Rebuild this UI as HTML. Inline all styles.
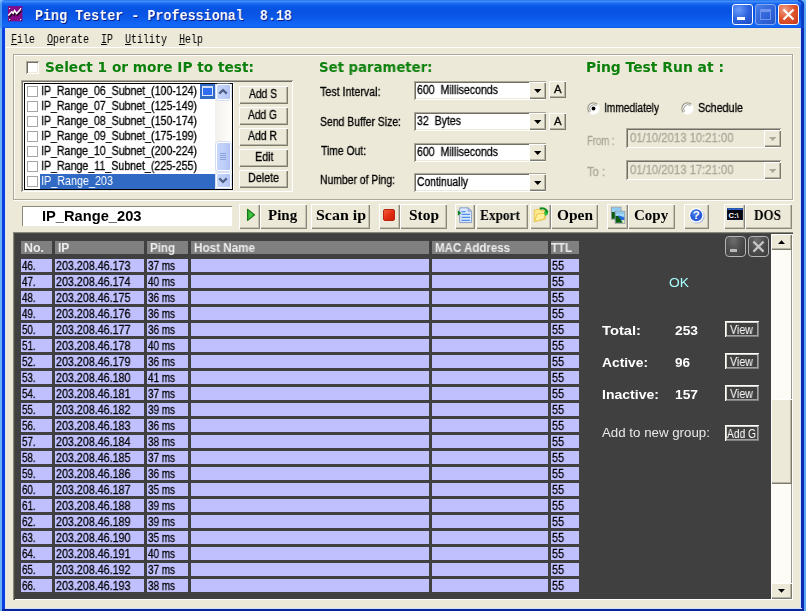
<!DOCTYPE html>
<html><head><meta charset="utf-8"><title>Ping Tester - Professional 8.18</title>
<style>
html,body{margin:0;padding:0;background:#ece9d8;}
body{width:806px;height:611px;overflow:hidden;}
#win{position:relative;width:806px;height:611px;overflow:hidden;background:#ece9d8;}
#win div,#win span.t,#win svg{position:absolute;box-sizing:border-box;}
.t{white-space:nowrap;line-height:1;transform-origin:0 0;will-change:transform;}
.t u{text-decoration:underline;text-underline-offset:1px;text-decoration-thickness:1px;}
/* classic 3d */
.r{background:#ece9d8;box-shadow:inset 1px 1px 0 #fff,inset -1px -1px 0 #7d7b6e,inset -2px -2px 0 #b8b5a4;}
.s{background:#fff;box-shadow:inset 1px 1px 0 #aca899,inset -1px -1px 0 #fff,inset 2px 2px 0 #716f64,inset -2px -2px 0 #ece9d8;}
.tb{background:#ece9d8;box-shadow:inset 1px 1px 0 #fff,inset -1px -1px 0 #8a887a,inset -2px -2px 0 #c5c2b2;}
.cell{background:#c0c0ff;}
.hd{background:#808080;}
.cb{background:#fff;border:1px solid #a5a5a5;}
.vb{background:#404040;box-shadow:inset 1px 1px 0 #fff,inset -1px -1px 0 #808080,inset 2px 2px 0 #d4d0c8,inset -2px -2px 0 #a0a0a0;}

</style></head>
<body>
<div id="win">
<div style="left:0px;top:0px;width:806px;height:28px;background:linear-gradient(to bottom,#2a72ee 0,#3c8cfa 1.5px,#1c6af2 3.5px,#0a58e6 6px,#0852e2 10px,#0a56e6 16px,#0e60f0 21px,#1468f6 25px,#1264f0 27px,#0c56de 28px);"></div>
<div style="left:0px;top:28px;width:2px;height:583px;background:#6cb0f8;"></div>
<div style="left:2px;top:28px;width:3px;height:583px;background:#0c3fe0;"></div>
<div style="left:5px;top:28px;width:1px;height:580px;background:#dfe6f3;"></div>
<div style="left:800px;top:28px;width:1.2px;height:581px;background:#d8e4f4;"></div>
<div style="left:801.2px;top:28px;width:2.8px;height:583px;background:#0a2cb4;"></div>
<div style="left:804px;top:5px;width:2px;height:606px;background:#5aa6f6;"></div>
<div style="left:801px;top:5px;width:3px;height:23px;background:#0a3cc4;"></div>
<div style="left:5px;top:608px;width:797px;height:1px;background:#cfe0f8;"></div>
<div style="left:2px;top:609px;width:802px;height:2px;background:#0a249c;"></div>
<div style="left:0px;top:0px;width:2px;height:28px;background:#4a94f4;"></div>
<svg style="left:796px;top:0" width="10" height="8" viewBox="0 0 10 8"><path d="M3.5 0 A5 5 0 0 1 8.2 5 L8.2 8 L10 8 L10 0 Z" fill="#6ab2fa"/><path d="M2 0 H3.5 A5 5 0 0 1 8.2 5 V8 H5.5 V5 A3 3 0 0 0 2 1.5 Z" fill="#0a3cc4"/></svg>
<svg style="left:0;top:0" width="8" height="8" viewBox="0 0 8 8"><path d="M0 0 H5 A5 5 0 0 0 0 5 Z" fill="#7ab8fa"/></svg>
<svg style="left:8px;top:6px" width="15" height="16" viewBox="0 0 15 16"><rect x="0" y="0.2" width="14.4" height="15.1" fill="#860a86"/><path d="M1.1 11.2 L4.7 7.4 L6 9 L7.4 6.1 L9.4 9.2 L13.3 4.9" stroke="#1a001a" stroke-width="1.5" fill="none"/><path d="M0.3 9.6 L3.9 5.8 L5.2 7.4 L6.6 4.5 L8.6 7.6 L12.5 3.3" stroke="#fff" stroke-width="1.5" fill="none"/><g fill="#2a002a"><rect x="2" y="3" width="1" height="1"/><rect x="13" y="3" width="1" height="1"/><rect x="2" y="14" width="1" height="1"/><rect x="13" y="14" width="1" height="1"/></g><g fill="#fff"><rect x="1" y="2" width="1.2" height="1.2"/><rect x="12" y="2" width="1.2" height="1.2"/><rect x="1" y="13" width="1.2" height="1.2"/><rect x="12" y="13" width="1.2" height="1.2"/></g></svg>
<div style="left:732px;top:4px;width:21px;height:21px;background:radial-gradient(circle at 30% 25%,#6a9cf8 0%,#2e64e0 50%,#1c48c0 100%);border:1px solid #fff;border-radius:3px;"><div style="left:4px;top:12px;width:8px;height:3px;background:#fff;"></div></div>
<div style="left:755px;top:4px;width:21px;height:21px;background:linear-gradient(135deg,#4a7ee8 0%,#2e62d8 60%,#2a58c8 100%);border:1px solid #86a8f0;border-radius:3px;"><div style="left:4px;top:4px;width:11px;height:11px;border:1px solid #6f95ee;border-top-width:3px;"></div></div>
<div style="left:778px;top:4px;width:21px;height:21px;background:radial-gradient(circle at 30% 25%,#f0a088 0%,#e0572f 45%,#c4361a 100%);border:1px solid #fff;border-radius:3px;"><svg style="left:0;top:0" width="19" height="19" viewBox="0 0 19 19"><path d="M4.5 4.5 L14.5 14.5 M14.5 4.5 L4.5 14.5" stroke="#fff" stroke-width="2.2" stroke-linecap="butt"/></svg></div>
<div style="left:6px;top:47px;width:794px;height:1px;background:#fff;"></div>
<div style="left:13px;top:54px;width:780px;height:146px;border:1px solid #aca899;box-shadow:inset 1px 1px 0 #fff,1px 1px 0 #fff;"></div>
<div class="s" style="left:26px;top:61px;width:13px;height:13px;"></div>
<div class="s" style="left:21px;top:80px;width:272px;height:112px;background:#ece9d8;"></div>
<div style="left:23px;top:82px;width:211px;height:108px;background:#fff;"></div>
<div style="left:24px;top:83px;width:209px;height:107px;background:#fff;border:1px solid #000;"></div>
<div style="left:40px;top:174px;width:175px;height:15px;background:#316ac5;"></div>
<div class="cb" style="left:27px;top:86px;width:11px;height:11px;"></div>
<div class="cb" style="left:27px;top:101px;width:11px;height:11px;"></div>
<div class="cb" style="left:27px;top:116px;width:11px;height:11px;"></div>
<div class="cb" style="left:27px;top:131px;width:11px;height:11px;"></div>
<div class="cb" style="left:27px;top:146px;width:11px;height:11px;"></div>
<div class="cb" style="left:27px;top:161px;width:11px;height:11px;"></div>
<div class="cb" style="left:27px;top:176px;width:11px;height:11px;"></div>
<div style="left:200px;top:84px;width:15px;height:15px;background:#316ac5;"></div>
<div style="left:202px;top:86px;width:11px;height:10px;background:#2f6ef0;border:1px solid #dfe8fa;border-top:2px solid #cfdcf8;"></div>
<div style="left:215px;top:84px;width:17px;height:105px;background:linear-gradient(to right,#f3f1ec,#fefefb);"></div>
<div style="left:216.2px;top:84.3px;width:14.4px;height:16px;background:linear-gradient(to right,#c8d6fb,#bccdf9 60%,#b0c2f2);border:1px solid #fff;border-radius:2px;box-shadow:0 0 0 0.5px #b4c8f6;"><svg style="left:-0.8px;top:0" width="14" height="14" viewBox="0 0 14 14"><path d="M3.3 8.6 L7 5 L10.7 8.6" stroke="#4d6185" stroke-width="2.3" fill="none"/></svg></div>
<div style="left:216.2px;top:172.8px;width:14.4px;height:15.6px;background:linear-gradient(to right,#c8d6fb,#bccdf9 60%,#b0c2f2);border:1px solid #fff;border-radius:2px;box-shadow:0 0 0 0.5px #b4c8f6;"><svg style="left:-0.8px;top:-0.4px" width="14" height="14" viewBox="0 0 14 14"><path d="M3.3 5.4 L7 9 L10.7 5.4" stroke="#4d6185" stroke-width="2.3" fill="none"/></svg></div>
<div style="left:216.2px;top:142px;width:14.4px;height:28.6px;background:linear-gradient(to right,#c8d6fb,#bccdf9 60%,#b0c2f2);border:1px solid #fff;border-radius:2px;box-shadow:0 0 0 0.5px #b4c8f6;"><div style="left:3.2px;top:9.5px;width:6px;height:1px;background:#8ca2d8;box-shadow:0 2px 0 #8ca2d8,0 4px 0 #8ca2d8,0 6px 0 #8ca2d8;"></div></div>
<div class="r" style="left:239.4px;top:85.6px;width:48.6px;height:18.2px;"></div>
<div class="r" style="left:239.4px;top:106.6px;width:48.6px;height:18.2px;"></div>
<div class="r" style="left:239.4px;top:127.6px;width:48.6px;height:18.2px;"></div>
<div class="r" style="left:239.4px;top:148.6px;width:48.6px;height:18.2px;"></div>
<div class="r" style="left:239.4px;top:169.6px;width:48.6px;height:18.2px;"></div>
<div class="s" style="left:414px;top:80.5px;width:132px;height:19px;background:#fff;"></div>
<div class="r" style="left:529px;top:82px;width:16.8px;height:16.6px;"><svg style="left:5px;top:7.1px" width="8" height="4" viewBox="0 0 8 4"><path d="M0 0 L7.4 0 L3.7 4 Z" fill="#000"/></svg></div>
<div class="s" style="left:414px;top:111.8px;width:132px;height:19px;background:#fff;"></div>
<div class="r" style="left:529px;top:113.3px;width:16.8px;height:16.6px;"><svg style="left:5px;top:7.1px" width="8" height="4" viewBox="0 0 8 4"><path d="M0 0 L7.4 0 L3.7 4 Z" fill="#000"/></svg></div>
<div class="s" style="left:414px;top:142.8px;width:132px;height:19px;background:#fff;"></div>
<div class="r" style="left:529px;top:144.3px;width:16.8px;height:16.6px;"><svg style="left:5px;top:7.1px" width="8" height="4" viewBox="0 0 8 4"><path d="M0 0 L7.4 0 L3.7 4 Z" fill="#000"/></svg></div>
<div class="s" style="left:414px;top:172.8px;width:132px;height:19px;background:#fff;"></div>
<div class="r" style="left:529px;top:174.3px;width:16.8px;height:16.6px;"><svg style="left:5px;top:7.1px" width="8" height="4" viewBox="0 0 8 4"><path d="M0 0 L7.4 0 L3.7 4 Z" fill="#000"/></svg></div>
<div class="r" style="left:549px;top:81px;width:17px;height:16.8px;"></div>
<div class="r" style="left:549px;top:112.8px;width:17px;height:16.8px;"></div>
<div class="s" style="left:626.4px;top:128.4px;width:155px;height:19.7px;background:#ece9d8;"></div>
<div class="r" style="left:764.4px;top:129.9px;width:16.8px;height:17.3px;"><svg style="left:5px;top:7.45px" width="8" height="4" viewBox="0 0 8 4"><path d="M0 0 L7.4 0 L3.7 4 Z" fill="#aca899"/></svg></div>
<div class="s" style="left:626.4px;top:160.3px;width:155px;height:20px;background:#ece9d8;"></div>
<div class="r" style="left:764.4px;top:161.8px;width:16.8px;height:17.6px;"><svg style="left:5px;top:7.6px" width="8" height="4" viewBox="0 0 8 4"><path d="M0 0 L7.4 0 L3.7 4 Z" fill="#aca899"/></svg></div>
<svg style="left:587px;top:101.5px" width="13" height="13" viewBox="0 0 13 13"><circle cx="6.5" cy="6.5" r="5.6" fill="#fff"/><path d="M2.5 10.5 A5.6 5.6 0 0 1 10.5 2.5" stroke="#9a988a" stroke-width="1.2" fill="none"/><path d="M3.5 9.5 A4.3 4.3 0 0 1 9.5 3.5" stroke="#6a695e" stroke-width="0.9" fill="none" opacity="0.75"/><path d="M10.5 2.5 A5.6 5.6 0 0 1 2.5 10.5" stroke="#fbfbf8" stroke-width="1.1" fill="none"/><circle cx="6.5" cy="6.5" r="1.9" fill="#000"/></svg>
<svg style="left:680.5px;top:101.5px" width="13" height="13" viewBox="0 0 13 13"><circle cx="6.5" cy="6.5" r="5.6" fill="#fff"/><path d="M2.5 10.5 A5.6 5.6 0 0 1 10.5 2.5" stroke="#9a988a" stroke-width="1.2" fill="none"/><path d="M3.5 9.5 A4.3 4.3 0 0 1 9.5 3.5" stroke="#6a695e" stroke-width="0.9" fill="none" opacity="0.75"/><path d="M10.5 2.5 A5.6 5.6 0 0 1 2.5 10.5" stroke="#fbfbf8" stroke-width="1.1" fill="none"/></svg>
<div style="left:22px;top:206px;width:210px;height:20px;background:#fff;box-shadow:inset 1px 1px 0 #8a887a,inset -1px -1px 0 #fff;"></div>
<div class="tb" style="left:239px;top:204px;width:21px;height:24.5px;"></div>
<div class="tb" style="left:260px;top:204px;width:47px;height:24.5px;"></div>
<div class="tb" style="left:311px;top:204px;width:59px;height:24.5px;"></div>
<div class="tb" style="left:379px;top:204px;width:21px;height:24.5px;"></div>
<div class="tb" style="left:400px;top:204px;width:47px;height:24.5px;"></div>
<div class="tb" style="left:454.5px;top:204px;width:20.5px;height:24.5px;"></div>
<div class="tb" style="left:475.5px;top:204px;width:52px;height:24.5px;"></div>
<div class="tb" style="left:530px;top:204px;width:21px;height:24.5px;"></div>
<div class="tb" style="left:551px;top:204px;width:46.5px;height:24.5px;"></div>
<div class="tb" style="left:607px;top:204px;width:21px;height:24.5px;"></div>
<div class="tb" style="left:628px;top:204px;width:47px;height:24.5px;"></div>
<div class="tb" style="left:684px;top:204px;width:25px;height:24.5px;"></div>
<div class="tb" style="left:724px;top:204px;width:20.5px;height:24.5px;"></div>
<div class="tb" style="left:745px;top:204px;width:47px;height:24.5px;"></div>
<svg style="left:246px;top:208px" width="10" height="14" viewBox="0 0 10 14"><defs><linearGradient id="pg" x1="0" y1="0" x2="1" y2="0"><stop offset="0" stop-color="#2aa02a"/><stop offset="0.5" stop-color="#48d048"/><stop offset="1" stop-color="#1a8a1a"/></linearGradient></defs><path d="M1.5 1.3 L8.6 6.9 L1.5 12.5 Z" fill="url(#pg)" stroke="#187818" stroke-width="1.1" stroke-linejoin="round"/></svg>
<div style="left:383px;top:209px;width:12px;height:12px;background:linear-gradient(135deg,#f4603c,#e02c10 55%,#cc2008);border:1px solid #b82410;border-radius:2px;"></div>
<svg style="left:456px;top:206px" width="18" height="20" viewBox="0 0 18 20"><path d="M3.7 1.8 H12 L15.6 5.2 V16.6 H3.7 Z" fill="#d8e8ff" stroke="#8a9ccc" stroke-width="1"/><path d="M12 1.8 V5.2 H15.6 Z" fill="#b8c8ec" stroke="#8a9ccc" stroke-width="0.8"/><path d="M5.5 5.6 H9.5 M5.5 8.4 H14 M5.5 11.4 H14 M5.5 14.3 H14" stroke="#4f8ee4" stroke-width="1.3"/><path d="M1.8 4.2 L5.2 7 L1.8 9.8 Z" fill="#0a801c"/></svg>
<svg style="left:532px;top:206px" width="18" height="20" viewBox="0 0 18 20"><path d="M2.2 4.6 L4.5 3.4 H8 L9 4.6 H13.5 V13 L2.2 15.6 Z" fill="#fbe98a" stroke="#e8c24a" stroke-width="0.9"/><path d="M5 8.2 L14.6 7 L11.5 13.2 L2.4 15.6 Z" fill="#fdf09c" stroke="#e8c24a" stroke-width="0.9"/><path d="M12 5.6 L16.3 4.6 L15.8 8.8 L12.8 9.9 Z" fill="#3aba40"/><path d="M7.8 2.8 C10.8 1.7 14 2.8 15.4 6.4" stroke="#0f8a1f" stroke-width="2.1" fill="none"/></svg>
<svg style="left:609px;top:206px" width="18" height="20" viewBox="0 0 18 20"><g transform="translate(2.4 1.2)"><rect x="0" y="0" width="9.6" height="12" fill="#a8dcf8" stroke="#909498" stroke-width="0.9"/><path d="M0.5 3 H9.1 V0.5 H0.5 Z" fill="#8ccaf4"/><path d="M0.5 5 L4 4.2 L9.1 6 V9 L0.5 9 Z" fill="#2a68d4"/><path d="M0.5 4.6 L3 5 L7.5 11.5 H0.5 Z" fill="#0a5c0a"/><path d="M7 9 L9.1 8.5 V11.5 H7.5 Z" fill="#d8f0a0"/></g><g transform="translate(6.2 5.2)"><rect x="0" y="0" width="9.6" height="12" fill="#a8dcf8" stroke="#909498" stroke-width="0.9"/><path d="M0.5 3 H9.1 V0.5 H0.5 Z" fill="#8ccaf4"/><path d="M0.5 5 L4 4.2 L9.1 6 V9 L0.5 9 Z" fill="#2a68d4"/><path d="M0.5 4.6 L3 5 L7.5 11.5 H0.5 Z" fill="#0a5c0a"/><path d="M7 9 L9.1 8.5 V11.5 H7.5 Z" fill="#d8f0a0"/></g></svg>
<svg style="left:687px;top:206px" width="20" height="20" viewBox="0 0 20 20"><circle cx="10" cy="10" r="7.6" fill="#8ca4d8" opacity="0.7"/><circle cx="9.3" cy="9.2" r="7.4" fill="#fff"/><circle cx="9.3" cy="9.2" r="6" fill="#2a5cd8"/><circle cx="8.3" cy="7.2" r="3.5" fill="#4a7cec" opacity="0.7"/><text x="9.3" y="13.3" font-family="Liberation Sans, sans-serif" font-weight="bold" font-size="11.5" fill="#fff" text-anchor="middle">?</text></svg>
<svg style="left:727px;top:208px" width="16" height="12" viewBox="0 0 16 12"><rect width="16" height="12" fill="#050510"/><rect width="16" height="1.8" fill="#3a78e8"/><rect x="0" y="0" width="16" height="12" fill="none" stroke="#1a2a5a" stroke-width="0.8"/><text x="1.6" y="9.6" font-family="Liberation Sans, sans-serif" font-weight="bold" font-size="7.6" fill="#fff">C:\</text></svg>
<div style="left:13px;top:232px;width:780px;height:368px;background:#404040;box-shadow:inset 1px 1px 0 #8a887a,inset 2px 2px 0 #4c4b46,inset -1px -1px 0 #fff;"></div>
<div class="hd" style="left:21px;top:241px;width:31px;height:13px;"></div>
<div class="hd" style="left:55px;top:241px;width:89px;height:13px;"></div>
<div class="hd" style="left:147px;top:241px;width:41px;height:13px;"></div>
<div class="hd" style="left:191px;top:241px;width:238px;height:13px;"></div>
<div class="hd" style="left:432px;top:241px;width:116px;height:13px;"></div>
<div class="hd" style="left:551px;top:241px;width:28px;height:13px;"></div>
<div class="cell" style="left:21px;top:259px;width:31px;height:13px;"></div>
<div class="cell" style="left:55px;top:259px;width:89px;height:13px;"></div>
<div class="cell" style="left:147px;top:259px;width:41px;height:13px;"></div>
<div class="cell" style="left:191px;top:259px;width:238px;height:13px;"></div>
<div class="cell" style="left:432px;top:259px;width:116px;height:13px;"></div>
<div class="cell" style="left:551px;top:259px;width:28px;height:13px;"></div>
<div class="cell" style="left:21px;top:275px;width:31px;height:13px;"></div>
<div class="cell" style="left:55px;top:275px;width:89px;height:13px;"></div>
<div class="cell" style="left:147px;top:275px;width:41px;height:13px;"></div>
<div class="cell" style="left:191px;top:275px;width:238px;height:13px;"></div>
<div class="cell" style="left:432px;top:275px;width:116px;height:13px;"></div>
<div class="cell" style="left:551px;top:275px;width:28px;height:13px;"></div>
<div class="cell" style="left:21px;top:291px;width:31px;height:13px;"></div>
<div class="cell" style="left:55px;top:291px;width:89px;height:13px;"></div>
<div class="cell" style="left:147px;top:291px;width:41px;height:13px;"></div>
<div class="cell" style="left:191px;top:291px;width:238px;height:13px;"></div>
<div class="cell" style="left:432px;top:291px;width:116px;height:13px;"></div>
<div class="cell" style="left:551px;top:291px;width:28px;height:13px;"></div>
<div class="cell" style="left:21px;top:307px;width:31px;height:13px;"></div>
<div class="cell" style="left:55px;top:307px;width:89px;height:13px;"></div>
<div class="cell" style="left:147px;top:307px;width:41px;height:13px;"></div>
<div class="cell" style="left:191px;top:307px;width:238px;height:13px;"></div>
<div class="cell" style="left:432px;top:307px;width:116px;height:13px;"></div>
<div class="cell" style="left:551px;top:307px;width:28px;height:13px;"></div>
<div class="cell" style="left:21px;top:323px;width:31px;height:13px;"></div>
<div class="cell" style="left:55px;top:323px;width:89px;height:13px;"></div>
<div class="cell" style="left:147px;top:323px;width:41px;height:13px;"></div>
<div class="cell" style="left:191px;top:323px;width:238px;height:13px;"></div>
<div class="cell" style="left:432px;top:323px;width:116px;height:13px;"></div>
<div class="cell" style="left:551px;top:323px;width:28px;height:13px;"></div>
<div class="cell" style="left:21px;top:339px;width:31px;height:13px;"></div>
<div class="cell" style="left:55px;top:339px;width:89px;height:13px;"></div>
<div class="cell" style="left:147px;top:339px;width:41px;height:13px;"></div>
<div class="cell" style="left:191px;top:339px;width:238px;height:13px;"></div>
<div class="cell" style="left:432px;top:339px;width:116px;height:13px;"></div>
<div class="cell" style="left:551px;top:339px;width:28px;height:13px;"></div>
<div class="cell" style="left:21px;top:355px;width:31px;height:13px;"></div>
<div class="cell" style="left:55px;top:355px;width:89px;height:13px;"></div>
<div class="cell" style="left:147px;top:355px;width:41px;height:13px;"></div>
<div class="cell" style="left:191px;top:355px;width:238px;height:13px;"></div>
<div class="cell" style="left:432px;top:355px;width:116px;height:13px;"></div>
<div class="cell" style="left:551px;top:355px;width:28px;height:13px;"></div>
<div class="cell" style="left:21px;top:371px;width:31px;height:13px;"></div>
<div class="cell" style="left:55px;top:371px;width:89px;height:13px;"></div>
<div class="cell" style="left:147px;top:371px;width:41px;height:13px;"></div>
<div class="cell" style="left:191px;top:371px;width:238px;height:13px;"></div>
<div class="cell" style="left:432px;top:371px;width:116px;height:13px;"></div>
<div class="cell" style="left:551px;top:371px;width:28px;height:13px;"></div>
<div class="cell" style="left:21px;top:387px;width:31px;height:13px;"></div>
<div class="cell" style="left:55px;top:387px;width:89px;height:13px;"></div>
<div class="cell" style="left:147px;top:387px;width:41px;height:13px;"></div>
<div class="cell" style="left:191px;top:387px;width:238px;height:13px;"></div>
<div class="cell" style="left:432px;top:387px;width:116px;height:13px;"></div>
<div class="cell" style="left:551px;top:387px;width:28px;height:13px;"></div>
<div class="cell" style="left:21px;top:403px;width:31px;height:13px;"></div>
<div class="cell" style="left:55px;top:403px;width:89px;height:13px;"></div>
<div class="cell" style="left:147px;top:403px;width:41px;height:13px;"></div>
<div class="cell" style="left:191px;top:403px;width:238px;height:13px;"></div>
<div class="cell" style="left:432px;top:403px;width:116px;height:13px;"></div>
<div class="cell" style="left:551px;top:403px;width:28px;height:13px;"></div>
<div class="cell" style="left:21px;top:419px;width:31px;height:13px;"></div>
<div class="cell" style="left:55px;top:419px;width:89px;height:13px;"></div>
<div class="cell" style="left:147px;top:419px;width:41px;height:13px;"></div>
<div class="cell" style="left:191px;top:419px;width:238px;height:13px;"></div>
<div class="cell" style="left:432px;top:419px;width:116px;height:13px;"></div>
<div class="cell" style="left:551px;top:419px;width:28px;height:13px;"></div>
<div class="cell" style="left:21px;top:435px;width:31px;height:13px;"></div>
<div class="cell" style="left:55px;top:435px;width:89px;height:13px;"></div>
<div class="cell" style="left:147px;top:435px;width:41px;height:13px;"></div>
<div class="cell" style="left:191px;top:435px;width:238px;height:13px;"></div>
<div class="cell" style="left:432px;top:435px;width:116px;height:13px;"></div>
<div class="cell" style="left:551px;top:435px;width:28px;height:13px;"></div>
<div class="cell" style="left:21px;top:451px;width:31px;height:13px;"></div>
<div class="cell" style="left:55px;top:451px;width:89px;height:13px;"></div>
<div class="cell" style="left:147px;top:451px;width:41px;height:13px;"></div>
<div class="cell" style="left:191px;top:451px;width:238px;height:13px;"></div>
<div class="cell" style="left:432px;top:451px;width:116px;height:13px;"></div>
<div class="cell" style="left:551px;top:451px;width:28px;height:13px;"></div>
<div class="cell" style="left:21px;top:467px;width:31px;height:13px;"></div>
<div class="cell" style="left:55px;top:467px;width:89px;height:13px;"></div>
<div class="cell" style="left:147px;top:467px;width:41px;height:13px;"></div>
<div class="cell" style="left:191px;top:467px;width:238px;height:13px;"></div>
<div class="cell" style="left:432px;top:467px;width:116px;height:13px;"></div>
<div class="cell" style="left:551px;top:467px;width:28px;height:13px;"></div>
<div class="cell" style="left:21px;top:483px;width:31px;height:13px;"></div>
<div class="cell" style="left:55px;top:483px;width:89px;height:13px;"></div>
<div class="cell" style="left:147px;top:483px;width:41px;height:13px;"></div>
<div class="cell" style="left:191px;top:483px;width:238px;height:13px;"></div>
<div class="cell" style="left:432px;top:483px;width:116px;height:13px;"></div>
<div class="cell" style="left:551px;top:483px;width:28px;height:13px;"></div>
<div class="cell" style="left:21px;top:499px;width:31px;height:13px;"></div>
<div class="cell" style="left:55px;top:499px;width:89px;height:13px;"></div>
<div class="cell" style="left:147px;top:499px;width:41px;height:13px;"></div>
<div class="cell" style="left:191px;top:499px;width:238px;height:13px;"></div>
<div class="cell" style="left:432px;top:499px;width:116px;height:13px;"></div>
<div class="cell" style="left:551px;top:499px;width:28px;height:13px;"></div>
<div class="cell" style="left:21px;top:515px;width:31px;height:13px;"></div>
<div class="cell" style="left:55px;top:515px;width:89px;height:13px;"></div>
<div class="cell" style="left:147px;top:515px;width:41px;height:13px;"></div>
<div class="cell" style="left:191px;top:515px;width:238px;height:13px;"></div>
<div class="cell" style="left:432px;top:515px;width:116px;height:13px;"></div>
<div class="cell" style="left:551px;top:515px;width:28px;height:13px;"></div>
<div class="cell" style="left:21px;top:531px;width:31px;height:13px;"></div>
<div class="cell" style="left:55px;top:531px;width:89px;height:13px;"></div>
<div class="cell" style="left:147px;top:531px;width:41px;height:13px;"></div>
<div class="cell" style="left:191px;top:531px;width:238px;height:13px;"></div>
<div class="cell" style="left:432px;top:531px;width:116px;height:13px;"></div>
<div class="cell" style="left:551px;top:531px;width:28px;height:13px;"></div>
<div class="cell" style="left:21px;top:547px;width:31px;height:13px;"></div>
<div class="cell" style="left:55px;top:547px;width:89px;height:13px;"></div>
<div class="cell" style="left:147px;top:547px;width:41px;height:13px;"></div>
<div class="cell" style="left:191px;top:547px;width:238px;height:13px;"></div>
<div class="cell" style="left:432px;top:547px;width:116px;height:13px;"></div>
<div class="cell" style="left:551px;top:547px;width:28px;height:13px;"></div>
<div class="cell" style="left:21px;top:563px;width:31px;height:13px;"></div>
<div class="cell" style="left:55px;top:563px;width:89px;height:13px;"></div>
<div class="cell" style="left:147px;top:563px;width:41px;height:13px;"></div>
<div class="cell" style="left:191px;top:563px;width:238px;height:13px;"></div>
<div class="cell" style="left:432px;top:563px;width:116px;height:13px;"></div>
<div class="cell" style="left:551px;top:563px;width:28px;height:13px;"></div>
<div class="cell" style="left:21px;top:579px;width:31px;height:13px;"></div>
<div class="cell" style="left:55px;top:579px;width:89px;height:13px;"></div>
<div class="cell" style="left:147px;top:579px;width:41px;height:13px;"></div>
<div class="cell" style="left:191px;top:579px;width:238px;height:13px;"></div>
<div class="cell" style="left:432px;top:579px;width:116px;height:13px;"></div>
<div class="cell" style="left:551px;top:579px;width:28px;height:13px;"></div>
<div style="left:771px;top:233.7px;width:21px;height:365.3px;background:#fdfcf7;border-right:1px solid #9a988c;"></div>
<div class="r" style="left:771px;top:233.7px;width:20.5px;height:16.3px;"><svg style="left:7px;top:6px" width="8" height="4" viewBox="0 0 8 4"><path d="M0 4 L7 4 L3.5 0.2 Z" fill="#000"/></svg></div>
<div class="r" style="left:771px;top:583px;width:20.5px;height:16px;"><svg style="left:7px;top:6px" width="8" height="4" viewBox="0 0 8 4"><path d="M0 0 L7 0 L3.5 3.8 Z" fill="#000"/></svg></div>
<div class="r" style="left:771px;top:399px;width:20.5px;height:84.5px;"></div>
<div style="left:725px;top:236px;width:21px;height:21px;background:radial-gradient(ellipse at 40% 15%,#6e6e6e 0%,#505050 45%,#3a3a3a 100%);border:1.5px solid #b4b4b4;border-radius:4px;"><div style="left:3.5px;top:11.5px;width:7px;height:3px;background:#b8b8b8;"></div></div>
<div style="left:748px;top:236px;width:21px;height:21px;background:radial-gradient(ellipse at 40% 15%,#6e6e6e 0%,#505050 45%,#3a3a3a 100%);border:1.5px solid #b4b4b4;border-radius:4px;"><svg style="left:0;top:0" width="18" height="18" viewBox="0 0 18 18"><path d="M4.4 4.6 L14.6 14.6 M14.6 4.6 L4.4 14.6" stroke="#c6c6c6" stroke-width="2.2"/></svg></div>
<div class="vb" style="left:725px;top:321px;width:33.5px;height:16px;"></div>
<div class="vb" style="left:725px;top:353px;width:33.5px;height:16px;"></div>
<div class="vb" style="left:725px;top:385px;width:33.5px;height:16px;"></div>
<div class="vb" style="left:725px;top:425px;width:33.5px;height:16px;"></div>
<span class="t" style="left:35.20px;top:8.50px;font:bold 15.5px/1 'Liberation Mono', monospace;color:#fff;transform:scaleX(0.8634);text-shadow:1px 1px 0 #0a1883;white-space:pre;">Ping Tester - Professional  8.18</span>
<span class="t mn" style="left:11.20px;top:33.50px;font:normal 12.5px/1 'Liberation Mono', monospace;color:#000;transform:scaleX(0.7992);"><u>F</u>ile</span>
<span class="t mn" style="left:47.20px;top:33.50px;font:normal 12.5px/1 'Liberation Mono', monospace;color:#000;transform:scaleX(0.7995);"><u>O</u>perate</span>
<span class="t mn" style="left:101.20px;top:33.50px;font:normal 12.5px/1 'Liberation Mono', monospace;color:#000;transform:scaleX(0.7983);"><u>I</u>P</span>
<span class="t mn" style="left:125.20px;top:33.50px;font:normal 12.5px/1 'Liberation Mono', monospace;color:#000;transform:scaleX(0.7995);"><u>U</u>tility</span>
<span class="t mn" style="left:179.20px;top:33.50px;font:normal 12.5px/1 'Liberation Mono', monospace;color:#000;transform:scaleX(0.7992);"><u>H</u>elp</span>
<span class="t" style="left:45.00px;top:61.30px;font:bold 13.5px/1 'DejaVu Sans', sans-serif;color:#0c800c;transform:scaleX(1.0148);">Select 1 or more IP to test:</span>
<span class="t" style="left:319.40px;top:61.30px;font:bold 13.5px/1 'DejaVu Sans', sans-serif;color:#0c800c;transform:scaleX(0.9829);">Set parameter:</span>
<span class="t" style="left:586.20px;top:61.30px;font:bold 13.5px/1 'DejaVu Sans', sans-serif;color:#0c800c;transform:scaleX(1.0279);">Ping Test Run at :</span>
<span class="t" style="left:40.80px;top:84.60px;font:normal 12.3px/1 'Liberation Sans', sans-serif;color:#000;transform:scaleX(0.8610);-webkit-text-stroke:0.3px #000;">IP_Range_06_Subnet_(100-124)</span>
<span class="t" style="left:40.80px;top:99.60px;font:normal 12.3px/1 'Liberation Sans', sans-serif;color:#000;transform:scaleX(0.8610);-webkit-text-stroke:0.3px #000;">IP_Range_07_Subnet_(125-149)</span>
<span class="t" style="left:40.80px;top:114.60px;font:normal 12.3px/1 'Liberation Sans', sans-serif;color:#000;transform:scaleX(0.8610);-webkit-text-stroke:0.3px #000;">IP_Range_08_Subnet_(150-174)</span>
<span class="t" style="left:40.80px;top:129.60px;font:normal 12.3px/1 'Liberation Sans', sans-serif;color:#000;transform:scaleX(0.8610);-webkit-text-stroke:0.3px #000;">IP_Range_09_Subnet_(175-199)</span>
<span class="t" style="left:40.80px;top:144.60px;font:normal 12.3px/1 'Liberation Sans', sans-serif;color:#000;transform:scaleX(0.8610);-webkit-text-stroke:0.3px #000;">IP_Range_10_Subnet_(200-224)</span>
<span class="t" style="left:40.80px;top:159.60px;font:normal 12.3px/1 'Liberation Sans', sans-serif;color:#000;transform:scaleX(0.8653);-webkit-text-stroke:0.3px #000;">IP_Range_11_Subnet_(225-255)</span>
<span class="t" style="left:40.80px;top:174.60px;font:normal 12.3px/1 'Liberation Sans', sans-serif;color:#fff;transform:scaleX(0.8774);">IP_Range_203</span>
<span class="t" style="left:248.80px;top:87.60px;font:normal 12.3px/1 'Liberation Sans', sans-serif;color:#000;transform:scaleX(0.8358);-webkit-text-stroke:0.3px #000;">Add S</span>
<span class="t" style="left:248.30px;top:108.60px;font:normal 12.3px/1 'Liberation Sans', sans-serif;color:#000;transform:scaleX(0.8315);-webkit-text-stroke:0.3px #000;">Add G</span>
<span class="t" style="left:248.30px;top:129.60px;font:normal 12.3px/1 'Liberation Sans', sans-serif;color:#000;transform:scaleX(0.8483);-webkit-text-stroke:0.3px #000;">Add R</span>
<span class="t" style="left:254.55px;top:150.60px;font:normal 12.3px/1 'Liberation Sans', sans-serif;color:#000;transform:scaleX(0.8725);-webkit-text-stroke:0.3px #000;">Edit</span>
<span class="t" style="left:248.30px;top:171.60px;font:normal 12.3px/1 'Liberation Sans', sans-serif;color:#000;transform:scaleX(0.8721);-webkit-text-stroke:0.3px #000;">Delete</span>
<span class="t" style="left:320.20px;top:86.00px;font:normal 12px/1 'Liberation Sans', sans-serif;color:#000;transform:scaleX(0.8893);-webkit-text-stroke:0.3px #000;">Test Interval:</span>
<span class="t" style="left:320.20px;top:115.50px;font:normal 12px/1 'Liberation Sans', sans-serif;color:#000;transform:scaleX(0.8694);-webkit-text-stroke:0.3px #000;">Send Buffer Size:</span>
<span class="t" style="left:320.50px;top:145.00px;font:normal 12px/1 'Liberation Sans', sans-serif;color:#000;transform:scaleX(0.8615);-webkit-text-stroke:0.3px #000;">Time Out:</span>
<span class="t" style="left:320.20px;top:174.30px;font:normal 12px/1 'Liberation Sans', sans-serif;color:#000;transform:scaleX(0.8649);-webkit-text-stroke:0.3px #000;">Number of Ping:</span>
<span class="t" style="left:417.20px;top:83.50px;font:normal 12px/1 'Liberation Sans', sans-serif;color:#000;transform:scaleX(0.8800);white-space:pre;-webkit-text-stroke:0.3px #000;">600  Milliseconds</span>
<span class="t" style="left:417.20px;top:114.50px;font:normal 12px/1 'Liberation Sans', sans-serif;color:#000;transform:scaleX(0.8795);white-space:pre;-webkit-text-stroke:0.3px #000;">32  Bytes</span>
<span class="t" style="left:417.20px;top:145.80px;font:normal 12px/1 'Liberation Sans', sans-serif;color:#000;transform:scaleX(0.8800);white-space:pre;-webkit-text-stroke:0.3px #000;">600  Milliseconds</span>
<span class="t" style="left:417.20px;top:175.80px;font:normal 12px/1 'Liberation Sans', sans-serif;color:#000;transform:scaleX(0.8589);-webkit-text-stroke:0.3px #000;">Continually</span>
<span class="t" style="left:553.80px;top:84.00px;font:normal 11.5px/1 'Liberation Sans', sans-serif;color:#000;transform:scaleX(0.9776);-webkit-text-stroke:0.3px #000;">A</span>
<span class="t" style="left:553.80px;top:115.80px;font:normal 11.5px/1 'Liberation Sans', sans-serif;color:#000;transform:scaleX(0.9776);-webkit-text-stroke:0.3px #000;">A</span>
<span class="t" style="left:603.70px;top:102.00px;font:normal 12px/1 'Liberation Sans', sans-serif;color:#000;transform:scaleX(0.8502);-webkit-text-stroke:0.3px #000;">Immediately</span>
<span class="t" style="left:697.70px;top:102.00px;font:normal 12px/1 'Liberation Sans', sans-serif;color:#000;transform:scaleX(0.8992);-webkit-text-stroke:0.3px #000;">Schedule</span>
<span class="t" style="left:587.20px;top:134.50px;font:normal 12px/1 'Liberation Sans', sans-serif;color:#aca899;transform:scaleX(0.7932);-webkit-text-stroke:0.3px #aca899;">From :</span>
<span class="t" style="left:587.20px;top:165.50px;font:normal 12px/1 'Liberation Sans', sans-serif;color:#aca899;transform:scaleX(0.9305);-webkit-text-stroke:0.3px #aca899;">To :</span>
<span class="t" style="left:630.20px;top:132.00px;font:normal 12px/1 'Liberation Sans', sans-serif;color:#aca899;transform:scaleX(0.9400);-webkit-text-stroke:0.3px #aca899;">01/10/2013 10:21:00</span>
<span class="t" style="left:630.20px;top:164.00px;font:normal 12px/1 'Liberation Sans', sans-serif;color:#aca899;transform:scaleX(0.9400);-webkit-text-stroke:0.3px #aca899;">01/10/2013 17:21:00</span>
<span class="t" style="left:41.70px;top:209.20px;font:bold 14px/1 'Liberation Sans', sans-serif;color:#000;transform:scaleX(1.0479);">IP_Range_203</span>
<span class="t" style="left:268.20px;top:207.80px;font:bold 15px/1 'Liberation Serif', serif;color:#000;transform:scaleX(0.9936);">Ping</span>
<span class="t" style="left:315.50px;top:207.80px;font:bold 15px/1 'Liberation Serif', serif;color:#000;transform:scaleX(1.0614);">Scan ip</span>
<span class="t" style="left:408.70px;top:207.80px;font:bold 15px/1 'Liberation Serif', serif;color:#000;transform:scaleX(1.0278);">Stop</span>
<span class="t" style="left:480.20px;top:207.80px;font:bold 15px/1 'Liberation Serif', serif;color:#000;transform:scaleX(0.8889);">Export</span>
<span class="t" style="left:556.50px;top:207.80px;font:bold 15px/1 'Liberation Serif', serif;color:#000;transform:scaleX(1.0281);">Open</span>
<span class="t" style="left:634.20px;top:207.80px;font:bold 15px/1 'Liberation Serif', serif;color:#000;transform:scaleX(0.9945);">Copy</span>
<span class="t" style="left:754.20px;top:207.80px;font:bold 15px/1 'Liberation Serif', serif;color:#000;transform:scaleX(0.8754);">DOS</span>
<span class="t" style="left:24.20px;top:241.80px;font:bold 12px/1 'Liberation Sans', sans-serif;color:#ececec;transform:scaleX(1.0339);">No.</span>
<span class="t" style="left:58.20px;top:241.80px;font:bold 12px/1 'Liberation Sans', sans-serif;color:#ececec;transform:scaleX(0.9697);">IP</span>
<span class="t" style="left:150.20px;top:241.80px;font:bold 12px/1 'Liberation Sans', sans-serif;color:#ececec;transform:scaleX(0.9615);">Ping</span>
<span class="t" style="left:194.20px;top:241.80px;font:bold 12px/1 'Liberation Sans', sans-serif;color:#ececec;transform:scaleX(0.9731);">Host Name</span>
<span class="t" style="left:435.20px;top:241.80px;font:bold 12px/1 'Liberation Sans', sans-serif;color:#ececec;transform:scaleX(0.9587);">MAC Address</span>
<span class="t" style="left:551.20px;top:241.80px;font:bold 12px/1 'Liberation Sans', sans-serif;color:#ececec;transform:scaleX(0.9545);">TTL</span>
<span class="t" style="left:22.20px;top:259.90px;font:normal 12.4px/1 'Liberation Sans', sans-serif;color:#000;transform:scaleX(0.7833);-webkit-text-stroke:0.3px #000;">46.</span>
<span class="t" style="left:56.00px;top:259.90px;font:normal 12.4px/1 'Liberation Sans', sans-serif;color:#000;transform:scaleX(0.8649);-webkit-text-stroke:0.3px #000;">203.208.46.173</span>
<span class="t" style="left:148.20px;top:259.90px;font:normal 12.4px/1 'Liberation Sans', sans-serif;color:#000;transform:scaleX(0.8000);-webkit-text-stroke:0.3px #000;">37 ms</span>
<span class="t" style="left:552.20px;top:259.90px;font:normal 12.4px/1 'Liberation Sans', sans-serif;color:#000;transform:scaleX(0.8698);-webkit-text-stroke:0.3px #000;">55</span>
<span class="t" style="left:22.20px;top:275.90px;font:normal 12.4px/1 'Liberation Sans', sans-serif;color:#000;transform:scaleX(0.7833);-webkit-text-stroke:0.3px #000;">47.</span>
<span class="t" style="left:56.00px;top:275.90px;font:normal 12.4px/1 'Liberation Sans', sans-serif;color:#000;transform:scaleX(0.8649);-webkit-text-stroke:0.3px #000;">203.208.46.174</span>
<span class="t" style="left:148.20px;top:275.90px;font:normal 12.4px/1 'Liberation Sans', sans-serif;color:#000;transform:scaleX(0.8000);-webkit-text-stroke:0.3px #000;">40 ms</span>
<span class="t" style="left:552.20px;top:275.90px;font:normal 12.4px/1 'Liberation Sans', sans-serif;color:#000;transform:scaleX(0.8698);-webkit-text-stroke:0.3px #000;">55</span>
<span class="t" style="left:22.20px;top:291.90px;font:normal 12.4px/1 'Liberation Sans', sans-serif;color:#000;transform:scaleX(0.7833);-webkit-text-stroke:0.3px #000;">48.</span>
<span class="t" style="left:56.00px;top:291.90px;font:normal 12.4px/1 'Liberation Sans', sans-serif;color:#000;transform:scaleX(0.8649);-webkit-text-stroke:0.3px #000;">203.208.46.175</span>
<span class="t" style="left:148.20px;top:291.90px;font:normal 12.4px/1 'Liberation Sans', sans-serif;color:#000;transform:scaleX(0.8000);-webkit-text-stroke:0.3px #000;">36 ms</span>
<span class="t" style="left:552.20px;top:291.90px;font:normal 12.4px/1 'Liberation Sans', sans-serif;color:#000;transform:scaleX(0.8698);-webkit-text-stroke:0.3px #000;">55</span>
<span class="t" style="left:22.20px;top:307.90px;font:normal 12.4px/1 'Liberation Sans', sans-serif;color:#000;transform:scaleX(0.7833);-webkit-text-stroke:0.3px #000;">49.</span>
<span class="t" style="left:56.00px;top:307.90px;font:normal 12.4px/1 'Liberation Sans', sans-serif;color:#000;transform:scaleX(0.8649);-webkit-text-stroke:0.3px #000;">203.208.46.176</span>
<span class="t" style="left:148.20px;top:307.90px;font:normal 12.4px/1 'Liberation Sans', sans-serif;color:#000;transform:scaleX(0.8000);-webkit-text-stroke:0.3px #000;">36 ms</span>
<span class="t" style="left:552.20px;top:307.90px;font:normal 12.4px/1 'Liberation Sans', sans-serif;color:#000;transform:scaleX(0.8698);-webkit-text-stroke:0.3px #000;">55</span>
<span class="t" style="left:22.20px;top:323.90px;font:normal 12.4px/1 'Liberation Sans', sans-serif;color:#000;transform:scaleX(0.7833);-webkit-text-stroke:0.3px #000;">50.</span>
<span class="t" style="left:56.00px;top:323.90px;font:normal 12.4px/1 'Liberation Sans', sans-serif;color:#000;transform:scaleX(0.8649);-webkit-text-stroke:0.3px #000;">203.208.46.177</span>
<span class="t" style="left:148.20px;top:323.90px;font:normal 12.4px/1 'Liberation Sans', sans-serif;color:#000;transform:scaleX(0.8000);-webkit-text-stroke:0.3px #000;">36 ms</span>
<span class="t" style="left:552.20px;top:323.90px;font:normal 12.4px/1 'Liberation Sans', sans-serif;color:#000;transform:scaleX(0.8698);-webkit-text-stroke:0.3px #000;">55</span>
<span class="t" style="left:22.20px;top:339.90px;font:normal 12.4px/1 'Liberation Sans', sans-serif;color:#000;transform:scaleX(0.7833);-webkit-text-stroke:0.3px #000;">51.</span>
<span class="t" style="left:56.00px;top:339.90px;font:normal 12.4px/1 'Liberation Sans', sans-serif;color:#000;transform:scaleX(0.8649);-webkit-text-stroke:0.3px #000;">203.208.46.178</span>
<span class="t" style="left:148.20px;top:339.90px;font:normal 12.4px/1 'Liberation Sans', sans-serif;color:#000;transform:scaleX(0.8000);-webkit-text-stroke:0.3px #000;">40 ms</span>
<span class="t" style="left:552.20px;top:339.90px;font:normal 12.4px/1 'Liberation Sans', sans-serif;color:#000;transform:scaleX(0.8698);-webkit-text-stroke:0.3px #000;">55</span>
<span class="t" style="left:22.20px;top:355.90px;font:normal 12.4px/1 'Liberation Sans', sans-serif;color:#000;transform:scaleX(0.7833);-webkit-text-stroke:0.3px #000;">52.</span>
<span class="t" style="left:56.00px;top:355.90px;font:normal 12.4px/1 'Liberation Sans', sans-serif;color:#000;transform:scaleX(0.8649);-webkit-text-stroke:0.3px #000;">203.208.46.179</span>
<span class="t" style="left:148.20px;top:355.90px;font:normal 12.4px/1 'Liberation Sans', sans-serif;color:#000;transform:scaleX(0.8000);-webkit-text-stroke:0.3px #000;">36 ms</span>
<span class="t" style="left:552.20px;top:355.90px;font:normal 12.4px/1 'Liberation Sans', sans-serif;color:#000;transform:scaleX(0.8698);-webkit-text-stroke:0.3px #000;">55</span>
<span class="t" style="left:22.20px;top:371.90px;font:normal 12.4px/1 'Liberation Sans', sans-serif;color:#000;transform:scaleX(0.7833);-webkit-text-stroke:0.3px #000;">53.</span>
<span class="t" style="left:56.00px;top:371.90px;font:normal 12.4px/1 'Liberation Sans', sans-serif;color:#000;transform:scaleX(0.8649);-webkit-text-stroke:0.3px #000;">203.208.46.180</span>
<span class="t" style="left:148.20px;top:371.90px;font:normal 12.4px/1 'Liberation Sans', sans-serif;color:#000;transform:scaleX(0.8000);-webkit-text-stroke:0.3px #000;">41 ms</span>
<span class="t" style="left:552.20px;top:371.90px;font:normal 12.4px/1 'Liberation Sans', sans-serif;color:#000;transform:scaleX(0.8698);-webkit-text-stroke:0.3px #000;">55</span>
<span class="t" style="left:22.20px;top:387.90px;font:normal 12.4px/1 'Liberation Sans', sans-serif;color:#000;transform:scaleX(0.7833);-webkit-text-stroke:0.3px #000;">54.</span>
<span class="t" style="left:56.00px;top:387.90px;font:normal 12.4px/1 'Liberation Sans', sans-serif;color:#000;transform:scaleX(0.8649);-webkit-text-stroke:0.3px #000;">203.208.46.181</span>
<span class="t" style="left:148.20px;top:387.90px;font:normal 12.4px/1 'Liberation Sans', sans-serif;color:#000;transform:scaleX(0.8000);-webkit-text-stroke:0.3px #000;">37 ms</span>
<span class="t" style="left:552.20px;top:387.90px;font:normal 12.4px/1 'Liberation Sans', sans-serif;color:#000;transform:scaleX(0.8698);-webkit-text-stroke:0.3px #000;">55</span>
<span class="t" style="left:22.20px;top:403.90px;font:normal 12.4px/1 'Liberation Sans', sans-serif;color:#000;transform:scaleX(0.7833);-webkit-text-stroke:0.3px #000;">55.</span>
<span class="t" style="left:56.00px;top:403.90px;font:normal 12.4px/1 'Liberation Sans', sans-serif;color:#000;transform:scaleX(0.8649);-webkit-text-stroke:0.3px #000;">203.208.46.182</span>
<span class="t" style="left:148.20px;top:403.90px;font:normal 12.4px/1 'Liberation Sans', sans-serif;color:#000;transform:scaleX(0.8000);-webkit-text-stroke:0.3px #000;">39 ms</span>
<span class="t" style="left:552.20px;top:403.90px;font:normal 12.4px/1 'Liberation Sans', sans-serif;color:#000;transform:scaleX(0.8698);-webkit-text-stroke:0.3px #000;">55</span>
<span class="t" style="left:22.20px;top:419.90px;font:normal 12.4px/1 'Liberation Sans', sans-serif;color:#000;transform:scaleX(0.7833);-webkit-text-stroke:0.3px #000;">56.</span>
<span class="t" style="left:56.00px;top:419.90px;font:normal 12.4px/1 'Liberation Sans', sans-serif;color:#000;transform:scaleX(0.8649);-webkit-text-stroke:0.3px #000;">203.208.46.183</span>
<span class="t" style="left:148.20px;top:419.90px;font:normal 12.4px/1 'Liberation Sans', sans-serif;color:#000;transform:scaleX(0.8000);-webkit-text-stroke:0.3px #000;">36 ms</span>
<span class="t" style="left:552.20px;top:419.90px;font:normal 12.4px/1 'Liberation Sans', sans-serif;color:#000;transform:scaleX(0.8698);-webkit-text-stroke:0.3px #000;">55</span>
<span class="t" style="left:22.20px;top:435.90px;font:normal 12.4px/1 'Liberation Sans', sans-serif;color:#000;transform:scaleX(0.7833);-webkit-text-stroke:0.3px #000;">57.</span>
<span class="t" style="left:56.00px;top:435.90px;font:normal 12.4px/1 'Liberation Sans', sans-serif;color:#000;transform:scaleX(0.8649);-webkit-text-stroke:0.3px #000;">203.208.46.184</span>
<span class="t" style="left:148.20px;top:435.90px;font:normal 12.4px/1 'Liberation Sans', sans-serif;color:#000;transform:scaleX(0.8000);-webkit-text-stroke:0.3px #000;">38 ms</span>
<span class="t" style="left:552.20px;top:435.90px;font:normal 12.4px/1 'Liberation Sans', sans-serif;color:#000;transform:scaleX(0.8698);-webkit-text-stroke:0.3px #000;">55</span>
<span class="t" style="left:22.20px;top:451.90px;font:normal 12.4px/1 'Liberation Sans', sans-serif;color:#000;transform:scaleX(0.7833);-webkit-text-stroke:0.3px #000;">58.</span>
<span class="t" style="left:56.00px;top:451.90px;font:normal 12.4px/1 'Liberation Sans', sans-serif;color:#000;transform:scaleX(0.8649);-webkit-text-stroke:0.3px #000;">203.208.46.185</span>
<span class="t" style="left:148.20px;top:451.90px;font:normal 12.4px/1 'Liberation Sans', sans-serif;color:#000;transform:scaleX(0.8000);-webkit-text-stroke:0.3px #000;">37 ms</span>
<span class="t" style="left:552.20px;top:451.90px;font:normal 12.4px/1 'Liberation Sans', sans-serif;color:#000;transform:scaleX(0.8698);-webkit-text-stroke:0.3px #000;">55</span>
<span class="t" style="left:22.20px;top:467.90px;font:normal 12.4px/1 'Liberation Sans', sans-serif;color:#000;transform:scaleX(0.7833);-webkit-text-stroke:0.3px #000;">59.</span>
<span class="t" style="left:56.00px;top:467.90px;font:normal 12.4px/1 'Liberation Sans', sans-serif;color:#000;transform:scaleX(0.8649);-webkit-text-stroke:0.3px #000;">203.208.46.186</span>
<span class="t" style="left:148.20px;top:467.90px;font:normal 12.4px/1 'Liberation Sans', sans-serif;color:#000;transform:scaleX(0.8000);-webkit-text-stroke:0.3px #000;">36 ms</span>
<span class="t" style="left:552.20px;top:467.90px;font:normal 12.4px/1 'Liberation Sans', sans-serif;color:#000;transform:scaleX(0.8698);-webkit-text-stroke:0.3px #000;">55</span>
<span class="t" style="left:22.20px;top:483.90px;font:normal 12.4px/1 'Liberation Sans', sans-serif;color:#000;transform:scaleX(0.7833);-webkit-text-stroke:0.3px #000;">60.</span>
<span class="t" style="left:56.00px;top:483.90px;font:normal 12.4px/1 'Liberation Sans', sans-serif;color:#000;transform:scaleX(0.8649);-webkit-text-stroke:0.3px #000;">203.208.46.187</span>
<span class="t" style="left:148.20px;top:483.90px;font:normal 12.4px/1 'Liberation Sans', sans-serif;color:#000;transform:scaleX(0.8000);-webkit-text-stroke:0.3px #000;">35 ms</span>
<span class="t" style="left:552.20px;top:483.90px;font:normal 12.4px/1 'Liberation Sans', sans-serif;color:#000;transform:scaleX(0.8698);-webkit-text-stroke:0.3px #000;">55</span>
<span class="t" style="left:22.20px;top:499.90px;font:normal 12.4px/1 'Liberation Sans', sans-serif;color:#000;transform:scaleX(0.7833);-webkit-text-stroke:0.3px #000;">61.</span>
<span class="t" style="left:56.00px;top:499.90px;font:normal 12.4px/1 'Liberation Sans', sans-serif;color:#000;transform:scaleX(0.8649);-webkit-text-stroke:0.3px #000;">203.208.46.188</span>
<span class="t" style="left:148.20px;top:499.90px;font:normal 12.4px/1 'Liberation Sans', sans-serif;color:#000;transform:scaleX(0.8000);-webkit-text-stroke:0.3px #000;">39 ms</span>
<span class="t" style="left:552.20px;top:499.90px;font:normal 12.4px/1 'Liberation Sans', sans-serif;color:#000;transform:scaleX(0.8698);-webkit-text-stroke:0.3px #000;">55</span>
<span class="t" style="left:22.20px;top:515.90px;font:normal 12.4px/1 'Liberation Sans', sans-serif;color:#000;transform:scaleX(0.7833);-webkit-text-stroke:0.3px #000;">62.</span>
<span class="t" style="left:56.00px;top:515.90px;font:normal 12.4px/1 'Liberation Sans', sans-serif;color:#000;transform:scaleX(0.8649);-webkit-text-stroke:0.3px #000;">203.208.46.189</span>
<span class="t" style="left:148.20px;top:515.90px;font:normal 12.4px/1 'Liberation Sans', sans-serif;color:#000;transform:scaleX(0.8000);-webkit-text-stroke:0.3px #000;">39 ms</span>
<span class="t" style="left:552.20px;top:515.90px;font:normal 12.4px/1 'Liberation Sans', sans-serif;color:#000;transform:scaleX(0.8698);-webkit-text-stroke:0.3px #000;">55</span>
<span class="t" style="left:22.20px;top:531.90px;font:normal 12.4px/1 'Liberation Sans', sans-serif;color:#000;transform:scaleX(0.7833);-webkit-text-stroke:0.3px #000;">63.</span>
<span class="t" style="left:56.00px;top:531.90px;font:normal 12.4px/1 'Liberation Sans', sans-serif;color:#000;transform:scaleX(0.8649);-webkit-text-stroke:0.3px #000;">203.208.46.190</span>
<span class="t" style="left:148.20px;top:531.90px;font:normal 12.4px/1 'Liberation Sans', sans-serif;color:#000;transform:scaleX(0.8000);-webkit-text-stroke:0.3px #000;">35 ms</span>
<span class="t" style="left:552.20px;top:531.90px;font:normal 12.4px/1 'Liberation Sans', sans-serif;color:#000;transform:scaleX(0.8698);-webkit-text-stroke:0.3px #000;">55</span>
<span class="t" style="left:22.20px;top:547.90px;font:normal 12.4px/1 'Liberation Sans', sans-serif;color:#000;transform:scaleX(0.7833);-webkit-text-stroke:0.3px #000;">64.</span>
<span class="t" style="left:56.00px;top:547.90px;font:normal 12.4px/1 'Liberation Sans', sans-serif;color:#000;transform:scaleX(0.8649);-webkit-text-stroke:0.3px #000;">203.208.46.191</span>
<span class="t" style="left:148.20px;top:547.90px;font:normal 12.4px/1 'Liberation Sans', sans-serif;color:#000;transform:scaleX(0.8000);-webkit-text-stroke:0.3px #000;">40 ms</span>
<span class="t" style="left:552.20px;top:547.90px;font:normal 12.4px/1 'Liberation Sans', sans-serif;color:#000;transform:scaleX(0.8698);-webkit-text-stroke:0.3px #000;">55</span>
<span class="t" style="left:22.20px;top:563.90px;font:normal 12.4px/1 'Liberation Sans', sans-serif;color:#000;transform:scaleX(0.7833);-webkit-text-stroke:0.3px #000;">65.</span>
<span class="t" style="left:56.00px;top:563.90px;font:normal 12.4px/1 'Liberation Sans', sans-serif;color:#000;transform:scaleX(0.8649);-webkit-text-stroke:0.3px #000;">203.208.46.192</span>
<span class="t" style="left:148.20px;top:563.90px;font:normal 12.4px/1 'Liberation Sans', sans-serif;color:#000;transform:scaleX(0.8000);-webkit-text-stroke:0.3px #000;">37 ms</span>
<span class="t" style="left:552.20px;top:563.90px;font:normal 12.4px/1 'Liberation Sans', sans-serif;color:#000;transform:scaleX(0.8698);-webkit-text-stroke:0.3px #000;">55</span>
<span class="t" style="left:22.20px;top:579.90px;font:normal 12.4px/1 'Liberation Sans', sans-serif;color:#000;transform:scaleX(0.7833);-webkit-text-stroke:0.3px #000;">66.</span>
<span class="t" style="left:56.00px;top:579.90px;font:normal 12.4px/1 'Liberation Sans', sans-serif;color:#000;transform:scaleX(0.8649);-webkit-text-stroke:0.3px #000;">203.208.46.193</span>
<span class="t" style="left:148.20px;top:579.90px;font:normal 12.4px/1 'Liberation Sans', sans-serif;color:#000;transform:scaleX(0.8000);-webkit-text-stroke:0.3px #000;">38 ms</span>
<span class="t" style="left:552.20px;top:579.90px;font:normal 12.4px/1 'Liberation Sans', sans-serif;color:#000;transform:scaleX(0.8698);-webkit-text-stroke:0.3px #000;">55</span>
<span class="t" style="left:668.70px;top:276.00px;font:normal 13.3px/1 'Liberation Sans', sans-serif;color:#aaffff;transform:scaleX(1.0407);">OK</span>
<span class="t" style="left:601.70px;top:324.00px;font:bold 13.5px/1 'Liberation Sans', sans-serif;color:#fff;transform:scaleX(1.0909);">Total:</span>
<span class="t" style="left:601.70px;top:356.00px;font:bold 13.5px/1 'Liberation Sans', sans-serif;color:#fff;transform:scaleX(1.0219);">Active:</span>
<span class="t" style="left:601.70px;top:388.00px;font:bold 13.5px/1 'Liberation Sans', sans-serif;color:#fff;transform:scaleX(1.0405);">Inactive:</span>
<span class="t" style="left:674.70px;top:324.00px;font:bold 13.5px/1 'Liberation Sans', sans-serif;color:#fff;transform:scaleX(1.0208);">253</span>
<span class="t" style="left:674.70px;top:356.00px;font:bold 13.5px/1 'Liberation Sans', sans-serif;color:#fff;transform:scaleX(0.9979);">96</span>
<span class="t" style="left:674.70px;top:388.00px;font:bold 13.5px/1 'Liberation Sans', sans-serif;color:#fff;transform:scaleX(1.0208);">157</span>
<span class="t" style="left:601.70px;top:425.90px;font:normal 13.3px/1 'Liberation Sans', sans-serif;color:#e8e8e8;transform:scaleX(0.9959);">Add to new group:</span>
<span class="t" style="left:730.20px;top:324.00px;font:normal 12.5px/1 'Liberation Sans', sans-serif;color:#fff;transform:scaleX(0.8558);">View</span>
<span class="t" style="left:730.20px;top:356.00px;font:normal 12.5px/1 'Liberation Sans', sans-serif;color:#fff;transform:scaleX(0.8558);">View</span>
<span class="t" style="left:730.20px;top:388.00px;font:normal 12.5px/1 'Liberation Sans', sans-serif;color:#fff;transform:scaleX(0.8558);">View</span>
<span class="t" style="left:727.20px;top:428.00px;font:normal 12px/1 'Liberation Sans', sans-serif;color:#fff;transform:scaleX(0.8522);">Add G</span>
</div>
</body></html>
